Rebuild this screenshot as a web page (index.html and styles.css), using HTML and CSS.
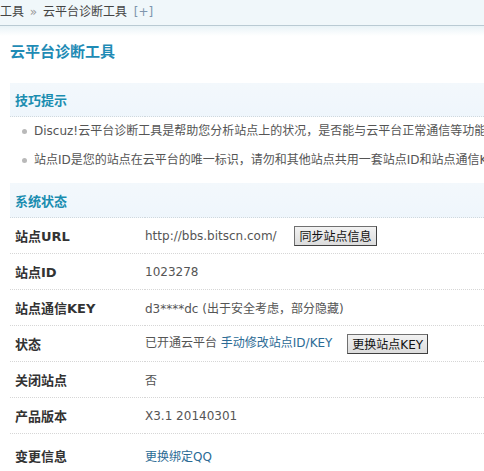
FILE: index.html
```html
<!DOCTYPE html>
<html>
<head lang="zh-CN">
    <meta charset="UTF-8">
    <title>云平台诊断工具</title>
    <link rel="stylesheet" href="styles.css">
</head>
<body>
<div class="nav">
    工具 <em>&raquo;</em> 云平台诊断工具 <a class="add" href="#">[+]</a>
</div>
<div class="shade"></div>
<div class="main">
    <h3>云平台诊断工具</h3>
    <table class="tb">
        <tr>
            <th colspan="2" class="partition">技巧提示</th>
        </tr>
        <tr>
            <td colspan="2" class="tips">
                <ul>
                    <li>Discuz!云平台诊断工具是帮助您分析站点上的状况，是否能与云平台正常通信等功能</li>
                    <li>站点ID是您的站点在云平台的唯一标识，请勿和其他站点共用一套站点ID和站点通信KEY</li>
                </ul>
            </td>
        </tr>
        <tr>
            <th colspan="2" class="partition second">系统状态</th>
        </tr>
        <tr>
            <td class="label">站点URL</td>
            <td class="value">http://bbs.bitscn.com/ <button class="btn">同步站点信息</button></td>
        </tr>
        <tr>
            <td class="label">站点ID</td>
            <td class="value">1023278</td>
        </tr>
        <tr>
            <td class="label">站点通信KEY</td>
            <td class="value">d3****dc (出于安全考虑，部分隐藏)</td>
        </tr>
        <tr>
            <td class="label">状态</td>
            <td class="value">已开通云平台 <a href="#">手动修改站点ID/KEY</a> <button class="btn">更换站点KEY</button></td>
        </tr>
        <tr>
            <td class="label">关闭站点</td>
            <td class="value">否</td>
        </tr>
        <tr>
            <td class="label">产品版本</td>
            <td class="value">X3.1 20140301</td>
        </tr>
        <tr class="last">
            <td class="label">变更信息</td>
            <td class="value"><a href="#">更换绑定QQ</a></td>
        </tr>
    </table>
</div>
</body>
</html>
```

FILE: styles.css
```css
* {
    padding: 0;
    margin: 0;
}

ul, ol {
    list-style: none;
}

html, body {
    overflow: hidden;
}

body {
    background: #ffffff;
    color: #555555;
    font: 12px "DejaVu Sans", "Noto Sans CJK SC", sans-serif;
}

a {
    color: #2b6b95;
    text-decoration: none;
}

.nav {
    height: 25px;
    line-height: 25px;
    background: #f0f7fa;
    border-bottom: 1px solid #b9cad3;
    color: #444444;
    white-space: nowrap;
}

.nav em {
    font-style: normal;
    color: #999999;
    padding: 0 2px;
}

.nav .add {
    color: #7f95ad;
    margin-left: 3px;
}

.shade {
    height: 10px;
    background: linear-gradient(#e9f3f7, #ffffff);
}

.main {
    padding-left: 10px;
}

h3 {
    height: 32px;
    line-height: 32px;
    font-size: 15px;
    color: #1f8bb5;
    font-weight: bold;
}

.tb {
    width: 620px;
    margin-top: 15px;
    border-collapse: collapse;
}

.tb td, .tb th {
    text-align: left;
    white-space: nowrap;
}

.partition {
    height: 33px;
    padding-left: 5px;
    background: linear-gradient(#f3f8fc, #eff6fc);
    color: #1a8db0;
    font-size: 13px;
    font-weight: bold;
    border-bottom: 1px dotted #cfd8de;
}

.partition.second {
    height: 34px;
}

.tips {
    padding: 0 0 8px 0;
}

.tips li {
    height: 29px;
    line-height: 29px;
    padding-left: 24px;
    position: relative;
    color: #555555;
}

.tips li:before {
    content: "";
    position: absolute;
    left: 12px;
    top: 12px;
    width: 5px;
    height: 5px;
    border-radius: 50%;
    background: #b9b9b9;
}

.label, .value {
    height: 35px;
    border-bottom: 1px dotted #d6d6d6;
}

.last .label, .last .value {
    height: 38px;
    padding-top: 2px;
}

.label {
    width: 130px;
    padding-left: 5px;
    color: #333333;
    font-weight: bold;
    font-size: 13px;
}

.value {
    color: #555555;
}

.btn {
    height: 20px;
    padding: 0 4px;
    margin-left: 14px;
    font: 12px "DejaVu Sans", "Noto Sans CJK SC", sans-serif;
    color: #111111;
    background: linear-gradient(#f2f2f2, #dcdcdc);
    border: 1px solid #707070;
    border-right-color: #404040;
    border-bottom-color: #404040;
    vertical-align: middle;
}

.value a + .btn {
    margin-left: 11px;
}
```
